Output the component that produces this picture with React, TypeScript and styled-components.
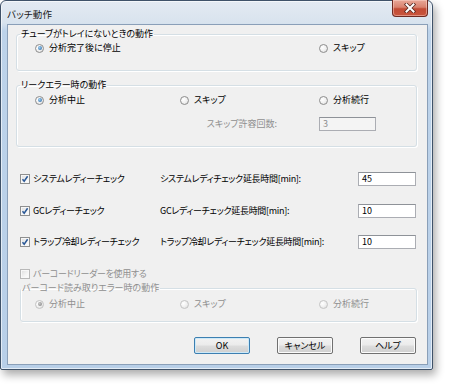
import { FC } from 'react';
import styled, { createGlobalStyle } from 'styled-components';

const GlobalStyle = createGlobalStyle`
  html, body {
    margin: 0;
    padding: 0;
    background: #ffffff;
  }
  body {
    font-family: "Noto Sans CJK JP", "Liberation Sans", sans-serif;
    font-size: 9px;
    font-feature-settings: "palt";
    color: #000;
  }
`;

const Page = styled.div`
  width: 450px;
  height: 390px;
  overflow: hidden;
`;

const Window = styled.div`
  box-sizing: border-box;
  width: 433px;
  height: 370px;
  border: 1px solid #3f5269;
  border-radius: 6px 6px 2px 2px;
  background: linear-gradient(180deg, #e3eaf2 0px, #d8e3ee 22px, #bdd3ea 30px, #b8cfe8 100%);
  box-shadow: 3px 5px 9px rgba(0, 0, 0, 0.32), inset 0 0 0 1px rgba(255, 255, 255, 0.6);
  display: flex;
  flex-direction: column;
  padding: 0 4px 4px 6px;
`;

const TitleBar = styled.div`
  height: 23px;
  display: flex;
  align-items: flex-start;
  flex-shrink: 0;
`;

const Title = styled.span`
  font-size: 9.5px;
  line-height: 12px;
  margin-top: 7px;
  color: #1a1a1a;
  letter-spacing: 0.2px;
`;

const CloseButton = styled.div`
  margin-left: auto;
  margin-top: -1px;
  width: 36px;
  height: 17px;
  box-sizing: border-box;
  border: 1px solid #6e2a22;
  border-top: none;
  border-radius: 0 0 4px 4px;
  background: linear-gradient(180deg, #e9a898 0%, #d9826f 45%, #c24b35 55%, #c9563d 100%);
  box-shadow: inset 0 0 0 1px rgba(255, 220, 210, 0.45);
  display: flex;
  align-items: center;
  justify-content: center;
`;

const Content = styled.div`
  flex: 1;
  box-sizing: border-box;
  background: #f0f0f0;
  border: 1px solid #8a9fb8;
  display: flex;
  flex-direction: column;
  padding: 0 10px 0 8px;
`;

const Group = styled.fieldset<{ inset?: number; top: number }>`
  margin: ${p => p.top}px 0 0 ${p => p.inset ?? 0}px;
  padding: 0;
  border: 1px solid #d5dfe5;
  border-radius: 3px;
  box-shadow: inset 1px 1px 0 #ffffff, 1px 1px 0 #ffffff;
  min-width: 0;
`;

const Legend = styled.legend<{ disabled?: boolean; offset?: number }>`
  margin-left: ${p => p.offset ?? 3}px;
  padding: 0 1px;
  font-size: 9px;
  line-height: 12px;
  color: ${p => (p.disabled ? '#8f8f8f' : '#000')};
`;

const RadioRow = styled.div<{ left: number; top: number; bottom: number }>`
  display: grid;
  grid-template-columns: 145px 139px 1fr;
  align-items: center;
  height: 12px;
  padding-left: ${p => p.left}px;
  margin-top: ${p => p.top}px;
  margin-bottom: ${p => p.bottom}px;
`;

const Option = styled.label<{ col?: number; disabled?: boolean }>`
  grid-column: ${p => p.col ?? 'auto'};
  display: flex;
  align-items: center;
  gap: 5px;
  font-size: 9px;
  line-height: 12px;
  color: ${p => (p.disabled ? '#8f8f8f' : '#000')};
  white-space: nowrap;
`;

const RadioDot = styled.span<{ checked?: boolean; disabled?: boolean }>`
  position: relative;
  width: 9px;
  height: 9px;
  box-sizing: border-box;
  border-radius: 50%;
  border: 1px solid ${p => (p.disabled ? '#c4c4c4' : '#8d8d8d')};
  background: radial-gradient(circle at 35% 35%, #ffffff 0%, #f1f1f1 50%, #d8d8d8 100%);
  flex-shrink: 0;

  &::after {
    content: '';
    display: ${p => (p.checked ? 'block' : 'none')};
    position: absolute;
    left: 1.5px;
    top: 1.5px;
    width: 4px;
    height: 4px;
    border-radius: 50%;
    background: ${p =>
      p.disabled
        ? 'radial-gradient(circle at 40% 40%, #c8c8c8, #7d7d7d)'
        : 'radial-gradient(circle at 40% 40%, #9fd0f5, #1c5c99)'};
  }
`;

const SkipRow = styled.div`
  display: grid;
  grid-template-columns: 145px 139px 1fr;
  align-items: center;
  padding-left: 18px;
  margin-top: 11px;
  margin-bottom: 15px;
`;

const SkipLabel = styled.span`
  grid-column: 2;
  justify-self: end;
  margin-right: 42px;
  color: #8f8f8f;
  font-size: 9px;
  line-height: 12px;
  white-space: nowrap;
`;

const Field = styled.div<{ width: number; disabled?: boolean }>`
  width: ${p => p.width}px;
  height: 14px;
  box-sizing: border-box;
  border: 1px solid #abadb3;
  border-top-color: #8e9298;
  background: ${p => (p.disabled ? '#f4f4f4' : '#ffffff')};
  color: ${p => (p.disabled ? '#8f8f8f' : '#000')};
  font-size: 9px;
  line-height: 12px;
  padding-left: 3px;
`;

const CheckRow = styled.div<{ top: number }>`
  display: grid;
  grid-template-columns: 140px 198px 58px;
  align-items: center;
  padding-left: 4px;
  margin-top: ${p => p.top}px;
  height: 14px;
`;

const CheckLabel = styled.label<{ disabled?: boolean }>`
  display: flex;
  align-items: center;
  gap: 3px;
  font-size: 9px;
  line-height: 12px;
  letter-spacing: -0.3px;
  color: ${p => (p.disabled ? '#8f8f8f' : '#000')};
  white-space: nowrap;
`;

const CheckBox = styled.span<{ disabled?: boolean }>`
  width: 10px;
  height: 10px;
  box-sizing: border-box;
  border: 1px solid ${p => (p.disabled ? '#b8b8b8' : '#8e8f8f')};
  background: linear-gradient(135deg, #dcdcdc 0%, #f4f4f4 60%, #ffffff 100%);
  box-shadow: inset 0 0 0 1px #f7f7f7;
  display: flex;
  align-items: center;
  justify-content: center;
  flex-shrink: 0;
`;

const PlainLabel = styled.span`
  font-size: 9px;
  line-height: 12px;
  letter-spacing: -0.3px;
  white-space: nowrap;
`;

const BarcodeRow = styled.div`
  padding-left: 4px;
  margin-top: 19px;
  height: 12px;
  display: flex;
  align-items: center;
`;

const ButtonBar = styled.div`
  display: flex;
  justify-content: flex-end;
  gap: 27px;
  margin-top: 15px;
  padding-right: 1px;
`;

const Button = styled.div<{ primary?: boolean }>`
  width: 56px;
  height: 17px;
  box-sizing: border-box;
  border: 1px solid ${p => (p.primary ? '#3c7fb1' : '#707070')};
  border-radius: 2px;
  background: linear-gradient(180deg, #f2f2f2 0%, #ebebeb 48%, #dddddd 52%, #cfcfcf 100%);
  box-shadow: inset 0 0 0 1px ${p => (p.primary ? '#cde9f8' : '#fbfbfb')};
  display: flex;
  align-items: center;
  justify-content: center;
  font-size: 9px;
  line-height: 12px;
  color: #000;
`;

const Check: FC = () => (
  <svg width="8" height="8" viewBox="0 0 8 8">
    <path d="M1.5 4.2 L3.2 6.2 L6.6 1.3" fill="none" stroke="#2a5896" strokeWidth="1.5" />
  </svg>
);

const CloseGlyph: FC = () => (
  <svg width="14" height="10" viewBox="0 0 14 10">
    <path d="M3.5 1.5 L10.5 8.5 M10.5 1.5 L3.5 8.5" stroke="#5a2a22" strokeWidth="3.6" strokeLinecap="square" />
    <path d="M3.5 1.5 L10.5 8.5 M10.5 1.5 L3.5 8.5" stroke="#ffffff" strokeWidth="2" strokeLinecap="square" />
  </svg>
);

type Ready = { label: string; time: string; value: string; top: number };

const readyChecks: Ready[] = [
  { label: 'システムレディーチェック', time: 'システムレディチェック延長時間[min]:', value: '45', top: 25 },
  { label: 'GCレディーチェック', time: 'GCレディーチェック延長時間[min]:', value: '10', top: 18 },
  { label: 'トラップ冷却レディーチェック', time: 'トラップ冷却レディーチェック延長時間[min]:', value: '10', top: 17 },
];

const App: FC = () => {
  return (
    <Page>
      <GlobalStyle />
      <Window>
        <TitleBar>
          <Title>バッチ動作</Title>
          <CloseButton>
            <CloseGlyph />
          </CloseButton>
        </TitleBar>
        <Content>
          <Group top={3}>
            <Legend>チューブがトレイにないときの動作</Legend>
            <RadioRow left={18} top={2} bottom={16}>
              <Option>
                <RadioDot checked />
                分析完了後に停止
              </Option>
              <Option col={3}>
                <RadioDot />
                スキップ
              </Option>
            </RadioRow>
          </Group>

          <Group top={8}>
            <Legend>リークエラー時の動作</Legend>
            <RadioRow left={18} top={3} bottom={0}>
              <Option>
                <RadioDot checked />
                分析中止
              </Option>
              <Option>
                <RadioDot />
                スキップ
              </Option>
              <Option>
                <RadioDot />
                分析続行
              </Option>
            </RadioRow>
            <SkipRow>
              <SkipLabel>スキップ許容回数:</SkipLabel>
              <Field width={57} disabled>
                3
              </Field>
            </SkipRow>
          </Group>

          {readyChecks.map(item => (
            <CheckRow key={item.label} top={item.top}>
              <CheckLabel>
                <CheckBox>
                  <Check />
                </CheckBox>
                {item.label}
              </CheckLabel>
              <PlainLabel>{item.time}</PlainLabel>
              <Field width={58}>{item.value}</Field>
            </CheckRow>
          ))}

          <BarcodeRow>
            <CheckLabel disabled>
              <CheckBox disabled />
              バーコードリーダーを使用する
            </CheckLabel>
          </BarcodeRow>

          <Group top={2} inset={4}>
            <Legend disabled offset={0}>
              バーコード読み取りエラー時の動作
            </Legend>
            <RadioRow left={14} top={4} bottom={11}>
              <Option disabled>
                <RadioDot checked disabled />
                分析中止
              </Option>
              <Option disabled>
                <RadioDot disabled />
                スキップ
              </Option>
              <Option disabled>
                <RadioDot disabled />
                分析続行
              </Option>
            </RadioRow>
          </Group>

          <ButtonBar>
            <Button primary>OK</Button>
            <Button>キャンセル</Button>
            <Button>ヘルプ</Button>
          </ButtonBar>
        </Content>
      </Window>
    </Page>
  );
};

export default App;
